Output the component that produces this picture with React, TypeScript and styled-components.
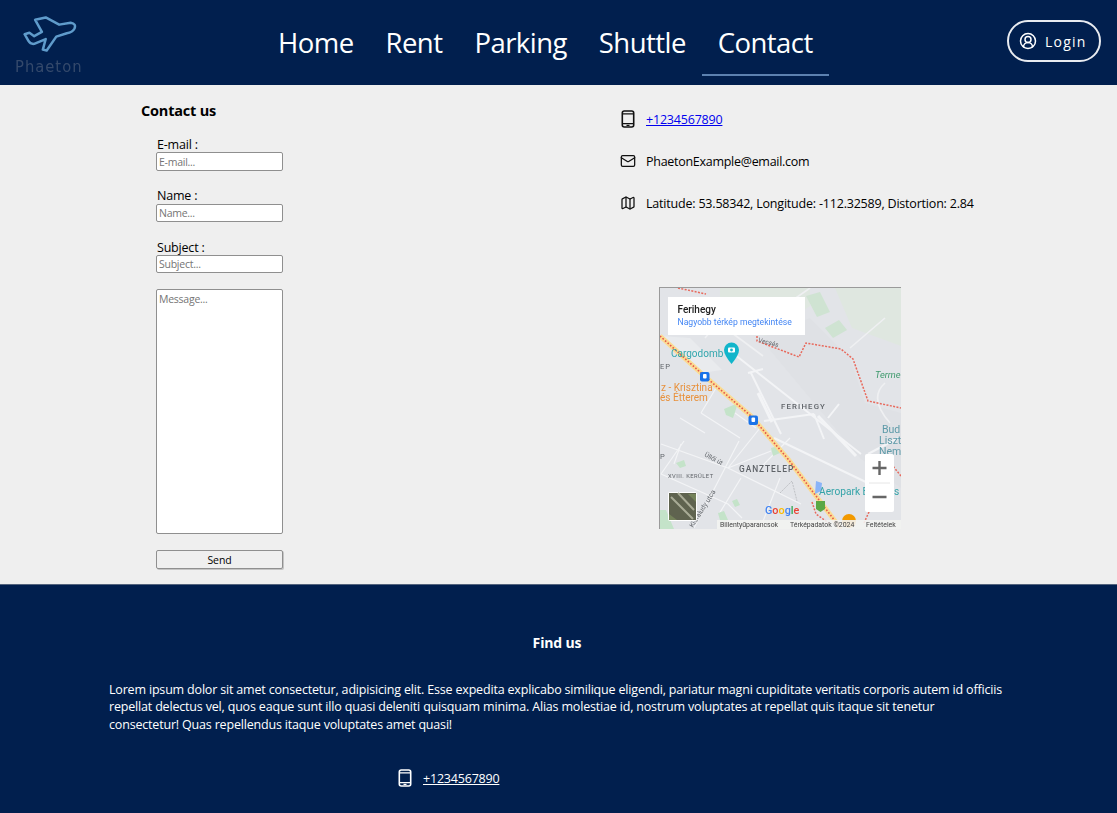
import React from "react";
import styled, { createGlobalStyle } from "styled-components";
import { CircleUserRound, Mail, Map as MapIcon } from "lucide-react";

const Global = createGlobalStyle`
  html, body { margin: 0; padding: 0; height: 813px; overflow: hidden; background: #efefef; }
  body { font-family: "Open Sans", "Noto Sans", sans-serif; color: #000; }
  #root { display: block; }
  * { box-sizing: border-box; }
`;
const Page = styled.div`display: flex; flex-direction: column; height: 813px; overflow: hidden;`;
const Header = styled.header`
  height: 85px; flex: none; background: #011f4e; display: grid;
  grid-template-columns: 251px 1fr 110px; align-items: stretch;
`;
const Logo = styled.div`display: flex; flex-direction: column; align-items: flex-start; padding: 15px 0 0 15px;`;
const PlaneSlot = styled.span`display: block; margin-left: 8px; height: 40px;`;
const LogoText = styled.span`
  font-family: "DejaVu Sans", sans-serif; font-size: 15px; line-height: 14px; letter-spacing: 1px;
  color: #34496b; margin-top: 5px; transform: scaleX(.985); transform-origin: left; white-space: nowrap;
`;
const Nav = styled.nav`display: flex; align-items: stretch; gap: 0; padding-left: 11px;`;
const NavLink = styled.a<{ $active?: boolean }>`
  font-size: 27.5px; letter-spacing: -.55px; color: #fff; line-height: 38px;
  padding: 24px 16px 0; height: 76px; white-space: nowrap;
  border-bottom: 2px solid ${p => (p.$active ? "#5c81b0" : "transparent")};
`;
const LoginCell = styled.div`display: flex; align-items: flex-start; padding-top: 20px;`;
const LoginButton = styled.button`
  width: 94px; height: 42px; border: 2px solid #e8ebf0; border-radius: 21px; background: transparent; color: #fff;
  font-family: inherit; font-size: 14px; letter-spacing: 1.25px; display: flex; align-items: center; gap: 8px; padding: 0 0 0 10px;
`;
const Main = styled.main`
  height: 499px; flex: none; background: #efefef; display: grid; grid-template-columns: 620px 1fr;
`;
const FormColumn = styled.section`padding: 16px 0 0 141px;`;
const Title = styled.h2`font-size: 14.5px; font-weight: 700; line-height: 20px; margin: 0 0 14px; letter-spacing: -.2px;`;
const Form = styled.form`display: flex; flex-direction: column; width: 127px; margin-left: 15px;`;
const Field = styled.label`display: flex; flex-direction: column; margin-bottom: 16px; font-size: 12.5px; letter-spacing: -.2px;`;
const LabelText = styled.span<{ $low?: boolean }>`
  display: block; height: 17px; margin-left: 1px; line-height: ${p => (p.$low ? 19 : 17)}px;
`;
const inputCss = `
  width: 127px; border: 1px solid #8f8f8f; border-radius: 2px; background: #fff; outline: none; padding: 0 2px;
  font-family: "Open Sans", sans-serif; font-size: 10.5px; letter-spacing: -.25px; display: block;
  &::placeholder { color: #757575; opacity: 1; }
`;
const Input = styled.input`${inputCss} height: 19px; &.tight { height: 18px; }`;
const Area = styled.textarea`${inputCss} height: 245px; padding-top: 2px; resize: none; margin-bottom: 16px;`;
const Send = styled.button`
  width: 127px; height: 19px; border: 1px solid #8f8f8f; border-radius: 2px; background: #efefef; color: #000;
  font-family: inherit; font-size: 10.5px; letter-spacing: -.1px; padding: 0; box-shadow: 1px 1px 0 #c4c4c4;
`;
const InfoColumn = styled.section`display: flex; flex-direction: column; padding-top: 13px;`;
const InfoRow = styled.div<{ $tight?: boolean }>`
  display: flex; align-items: center; gap: 10px; height: 42px; font-size: 12.5px; white-space: nowrap;
  letter-spacing: ${p => (p.$tight ? -0.28 : -0.2)}px;
`;
const IconSlot = styled.span`width: 16px; height: 18px; display: flex; align-items: center; justify-content: center; flex: none;`;
const Link = styled.a<{ $light?: boolean }>`
  color: ${p => (p.$light ? "#fff" : "#0000ee")}; text-decoration: underline;
`;
const MapFrame = styled.div`
  width: 242px; height: 242px; margin: 63px 0 0 39px; background: #e3e5e9; border-top: 1px solid #9a9a9a; border-left: 1px solid #9a9a9a;
  overflow: hidden; flex: none; svg { display: block; }
`;
const Footer = styled.footer`
  flex: 1; background: #011f4e; border-top: 1px solid #53637d; color: #fff; padding: 48px 0 0 109px;
`;
const FooterTitle = styled.h3`font-size: 14px; line-height: 20px; font-weight: 700; text-align: center; margin: 0 0 28px; width: 896px; letter-spacing: -.15px;`;
const Paragraph = styled.p`font-size: 12.5px; line-height: 17.4px; margin: 0 0 35px; width: 920px; letter-spacing: -.18px;`;
const FooterRow = styled.div`display: flex; align-items: center; gap: 10px; margin-left: 288px; font-size: 12.5px; letter-spacing: -.2px; height: 20px;`;

const Plane = () => (
  <svg width="56" height="40" viewBox="0 0 56 40" fill="none" stroke="#5f9bcb" strokeWidth="2.6" strokeLinejoin="round">
    <path d="M21 4 L32 1.5 L46 9 L58 7 Q64 8 62 13 Q60 17 54 18 L43 21.5 L33 36 L29 35 L32 24 L20 29 Q16 29.5 14 26 L10 19 L15 17.5 L20 21 L28 16.5 Z" transform="translate(-8 1) scale(.96)" />
  </svg>
);
const PhoneIcon = ({ color = "#111" }: { color?: string }) => (
  <svg width="14" height="18" viewBox="0 0 14 18" fill="none" stroke={color} strokeWidth="1.6">
    <rect x="1.3" y="1" width="11.4" height="16" rx="2" />
    <path d="M1.5 3.8h11M1.5 13.6h11" strokeWidth="1.2" />
    <path d="M5.5 15.4h3" strokeWidth="1.2" />
  </svg>
);
const MapText = styled.text<{ $size?: number; $fill?: string; $weight?: number; $spacing?: number }>`
  font-family: Roboto, sans-serif; font-size: ${p => p.$size ?? 9}px; fill: ${p => p.$fill ?? "#5f6368"};
  font-weight: ${p => p.$weight ?? 400}; letter-spacing: ${p => p.$spacing ?? 0}px;
`;
const ROAD = "M0 48 L41 85 L91 128 L128 171 L181 241";
const GoogleMap = () => (
  <svg width="241" height="241" viewBox="0 0 241 241" style={{ filter: "blur(.35px)" }}>
    <rect width="241" height="241" fill="#e2e4e8" />
    <path d="M100 50 L150 30 L190 70 L205 115 L241 125 L241 200 L200 170 L150 110 Z" fill="#dfe1e5" />
    <path d="M60 0 L150 0 L150 18 L105 48 L60 18Z M175 0 L192 40 L241 58 L241 0Z" fill="#dfe7e0" />
    <path d="M146 8 l14 -4 l10 20 l-13 5Z M165 40 l14 -8 l8 10 l-14 8Z" fill="#cfe3d2" />
    <path d="M0 48 L30 50 L62 82 L41 85Z" fill="#e9ebee" />
    <path d="M74 66 L201 166 M91 85 L121 146 M88 85 L103 81 M104 133 L154 126 M154 126 L164 151 M168 130 L179 116 M208 166 L238 150 M114 150 L210 196" stroke="#f3f4f6" strokeWidth="2" fill="none" />
    <path d="M98 105 L112 134 M158 128 L196 168" stroke="#f3f4f6" strokeWidth="3" fill="none" />
    <path d="M225 95 Q208 110 230 135 M70 20 L45 50 M103 68 L60 36 M150 0 L110 28 M225 30 L190 60" stroke="#eff0f2" strokeWidth="1.6" fill="none" />
    <path d="M1 156 L68 180 L141 216 M79 153 L34 240 M21 156 L14 176 M81 190 L59 226 M1 186 L68 216 L82 230 M68 180 L111 163 M41 125 L80 150 M56 100 L41 125 M20 130 L45 145 M75 125 L96 140 M100 140 L68 180 M24 153 L1 186 M100 180 L130 150 M120 190 L100 241" stroke="#f3f4f6" strokeWidth="1.2" fill="none" />
    <path d="M64 121 L78 115 L73 130 L66 127Z M16 175 L24 172 L26 178 L20 180Z M72 213 L77 211 L80 217 L75 219Z M58 225 L64 223 L68 232 L61 236Z M111 160 L118 158 L120 165 L113 168Z M0 222 L6 222 L14 241 L0 241Z" fill="#c4e3c9" />
    <path d={ROAD} stroke="#fbdc92" strokeWidth="4.8" fill="none" />
    <path d={ROAD} stroke="#e5574d" strokeWidth="1.6" strokeDasharray="1.6 1.8" fill="none" />
    <path d="M18 0 L46 6 M97 48 L97 53 L139 69 L146 55 L181 61 L193 71 L208 113 L241 120 M241 188 L228 172 M204 235 L213 215 L228 210 M152 214 L156 226 L170 236" stroke="#e8695c" strokeWidth="1.5" strokeDasharray="2 1.4" fill="none" />
    <path d="M120 205 L132 193 L137 213" stroke="#bfc1c5" strokeWidth="1" strokeDasharray="2 1" fill="none" />

    <rect x="8" y="9" width="137" height="38" fill="#fff" />
    <MapText x="17.5" y="25" $size={10} $fill="#222" $weight={500}>Ferihegy</MapText>
    <MapText x="17.5" y="37" $size={8.6} $fill="#4285f4">Nagyobb térkép megtekintése</MapText>
    <MapText x="98" y="54" $size={6.4} transform="rotate(14 98 54)">Vecsés</MapText>

    <MapText x="11" y="69" $size={10} $fill="#31a6ad">Cargodomb</MapText>
    <path d="M64 62 a7.5 7.5 0 0 1 15 0 q0 5 -7.5 14 q-7.5 -9 -7.5 -14Z" fill="#12b5cb" />
    <rect x="68" y="59.5" width="7" height="5" rx="1" fill="#fff" />
    <circle cx="71.5" cy="62" r="1.4" fill="#12b5cb" />
    <rect x="40" y="84" width="9.5" height="9.5" rx="2" fill="#1a73e8" />
    <rect x="43" y="86" width="3.6" height="4.4" rx="1" fill="#fff" />
    <rect x="88.5" y="127.5" width="9.5" height="9.5" rx="2" fill="#1a73e8" />
    <rect x="91.5" y="129.5" width="3.6" height="4.4" rx="1" fill="#fff" />
    <MapText x="1" y="103" $size={10} $fill="#e8913c">z - Krisztina</MapText>
    <MapText x="0" y="113" $size={10} $fill="#e8913c">és Étterem</MapText>
    <MapText x="0" y="81" $size={7.5} $spacing={1}>EP</MapText>
    <MapText x="0" y="171" $size={7.5}>P</MapText>
    <MapText x="215" y="90" $size={9.4} $fill="#3f9a6d" style={{ fontStyle: "italic" }}>Terme</MapText>
    <MapText x="121" y="121" $size={7.8} $weight={500} $spacing={1.15}>FERIHEGY</MapText>
    <MapText x="79" y="184" $size={8.4} $weight={500} $spacing={.95}>GANZTELEP</MapText>
    <MapText x="8" y="190" $size={5.8} $spacing={.45}>XVIII. KERÜLET</MapText>
    <MapText x="44" y="168" $size={6.4} transform="rotate(28 44 168)">Üllői út</MapText>
    <MapText x="33" y="240" $size={6.8} transform="rotate(-58 33 240)">Kisfaludy utca</MapText>
    <MapText x="222" y="145" $size={10.5} $fill="#5d9aa8">Bud</MapText>
    <MapText x="219" y="156" $size={10.5} $fill="#5d9aa8">Liszt</MapText>
    <MapText x="219" y="167" $size={10.5} $fill="#5d9aa8">Nem</MapText>
    <path d="M156 193 l6 2 l-1 8 l-6 3Z" fill="#8ab4f8" />
    <MapText x="159" y="207" $size={10.2} $fill="#34a3a8">Aeropark B</MapText>
    <MapText x="234" y="207" $size={10.2} $fill="#34a3a8">s</MapText>
    <path d="M156 213 h9 v8 l-4.5 3 l-4.5 -3Z" fill="#5aa845" />
    <circle cx="189" cy="233" r="7" fill="#f29900" />

    <rect x="205" y="166" width="29" height="58" rx="2" fill="#fff" />
    <path d="M209 195 h21" stroke="#e6e6e6" />
    <path d="M212.5 180 h14 M219.5 173 v14 M212.5 209 h14" stroke="#666" strokeWidth="2.4" />
    <rect x="8" y="204" width="29" height="29" rx="2" fill="#fff" />
    <rect x="9" y="205" width="27" height="27" fill="#5f634f" />
    <path d="M11 209 L24 222 L33 231 M18 205 L34 222" stroke="#a9ab96" strokeWidth="2" fill="none" />
    <path d="M9 226 L17 232 L9 232Z M28 206 L36 206 L36 214Z" fill="#74825a" />
    <text x="105" y="226" fontFamily="Roboto, sans-serif" fontSize="10.8" fontWeight="500">
      <tspan fill="#4285f4">G</tspan><tspan fill="#ea4335">o</tspan><tspan fill="#fbbc05">o</tspan><tspan fill="#4285f4">g</tspan><tspan fill="#34a853">l</tspan><tspan fill="#ea4335">e</tspan>
    </text>
    <rect x="57" y="232" width="184" height="9" fill="#f3f3f1" opacity=".9" />
    <MapText x="60" y="239" $size={6.9} $fill="#444">Billentyűparancsok</MapText>
    <MapText x="130" y="239" $size={6.9} $fill="#444">Térképadatok ©2024</MapText>
    <MapText x="206" y="239" $size={6.9} $fill="#444">Feltételek</MapText>
  </svg>
);

export default function App() {
  return (
    <Page>
      <Global />
      <Header>
        <Logo>
          <PlaneSlot><Plane /></PlaneSlot>
          <LogoText>Phaeton</LogoText>
        </Logo>
        <Nav>
          <NavLink>Home</NavLink>
          <NavLink>Rent</NavLink>
          <NavLink>Parking</NavLink>
          <NavLink>Shuttle</NavLink>
          <NavLink $active>Contact</NavLink>
        </Nav>
        <LoginCell>
          <LoginButton>
            <CircleUserRound size={18} strokeWidth={2} />
            Login
          </LoginButton>
        </LoginCell>
      </Header>
      <Main>
        <FormColumn>
          <Title>Contact us</Title>
          <Form>
            <Field><LabelText $low>E-mail :</LabelText><Input placeholder="E-mail..." /></Field>
            <Field><LabelText>Name :</LabelText><Input className="tight" placeholder="Name..." /></Field>
            <Field><LabelText $low>Subject :</LabelText><Input className="tight" placeholder="Subject..." /></Field>
            <Area placeholder="Message..." />
            <Send type="button">Send</Send>
          </Form>
        </FormColumn>
        <InfoColumn>
          <InfoRow><IconSlot><PhoneIcon /></IconSlot><Link href="#">+1234567890</Link></InfoRow>
          <InfoRow $tight><IconSlot><Mail size={20} color="#111" strokeWidth={1.9} /></IconSlot>PhaetonExample@email.com</InfoRow>
          <InfoRow><IconSlot><MapIcon size={20} color="#111" strokeWidth={1.9} /></IconSlot>Latitude: 53.58342, Longitude: -112.32589, Distortion: 2.84</InfoRow>
          <MapFrame><GoogleMap /></MapFrame>
        </InfoColumn>
      </Main>
      <Footer>
        <FooterTitle>Find us</FooterTitle>
        <Paragraph>
          Lorem ipsum dolor sit amet consectetur, adipisicing elit. Esse expedita explicabo similique eligendi, pariatur magni cupiditate veritatis corporis autem id officiis repellat delectus vel, quos eaque sunt illo quasi deleniti quisquam minima. Alias molestiae id, nostrum voluptates at repellat quis itaque sit tenetur<br />consectetur! Quas repellendus itaque voluptates amet quasi!
        </Paragraph>
        <FooterRow><IconSlot><PhoneIcon color="#fff" /></IconSlot><Link $light href="#">+1234567890</Link></FooterRow>
      </Footer>
    </Page>
  );
}
